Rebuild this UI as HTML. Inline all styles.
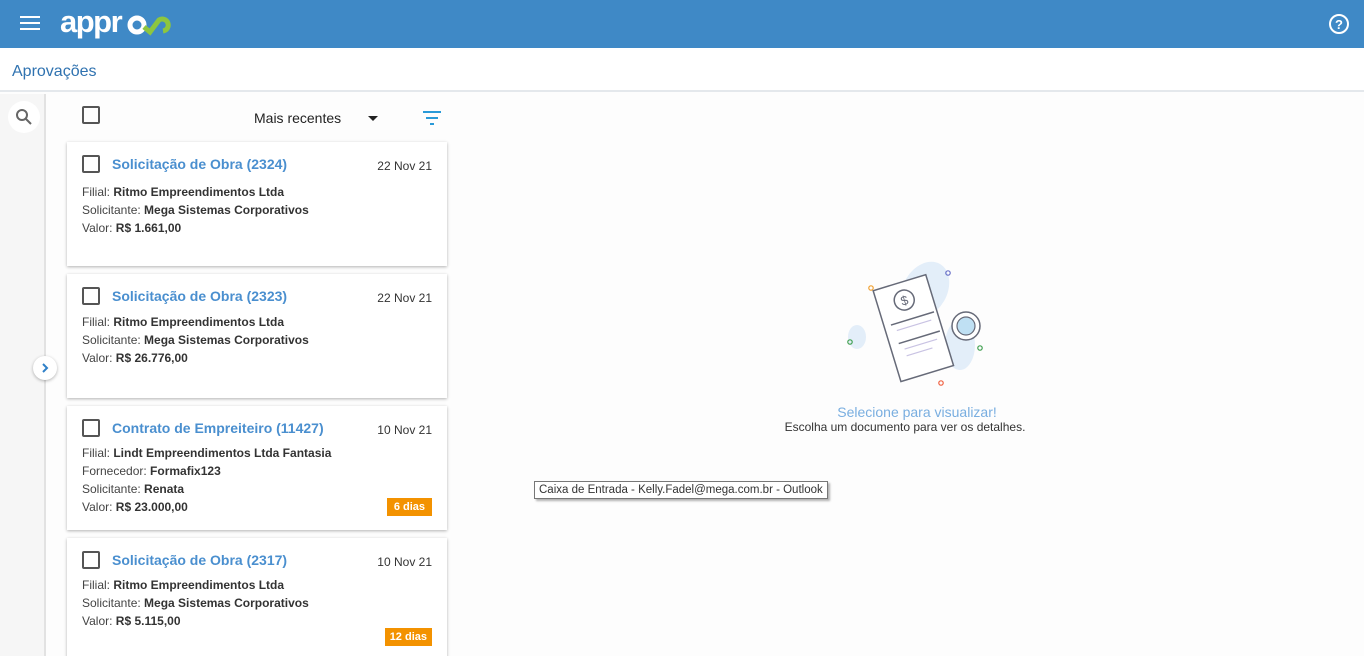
<!DOCTYPE html>
<html><head><meta charset="utf-8"><style>
*{box-sizing:border-box;margin:0;padding:0}
html,body{width:1364px;height:656px;overflow:hidden}
body{background:#fdfdfd;font-family:"Liberation Sans",Arial,sans-serif;position:relative}
.hdr{position:absolute;left:0;top:0;width:1364px;height:48px;background:#3f89c6}
.bar{position:absolute;left:0;top:48px;width:1364px;height:44px;background:#fff;border-bottom:2px solid #e4e8ec}
.bar span{position:absolute;left:12px;top:15px;font-size:16px;color:#2f72b0}
.rail{position:absolute;left:0;top:94px;width:46px;height:562px;background:#f6f6f6;border-right:2px solid #e2e2e2}
.card{position:absolute;left:67px;width:380px;background:#fff;box-shadow:0 1px 3px rgba(0,0,0,.3);font-size:12px;color:#444}
.cb{position:absolute;width:18px;height:18px;border:2px solid #555;border-radius:2px}
.t{position:absolute;left:45px;top:14px;font-size:14px;font-weight:bold;color:#4a8fcf}
.d{position:absolute;right:15px;top:17px;font-size:12px;color:#333}
.l{position:absolute;left:15px}
.l b{color:#333}
.tag{position:absolute;right:15px;background:#f39200;color:#fff;font-size:11px;font-weight:bold;padding:3px 7px}
</style></head><body>
<div class="hdr">
<div style="position:absolute;left:20px;top:16px;width:20px;height:2px;background:#fff;box-shadow:0 6px 0 #fff,0 12px 0 #fff"></div>
<div style="position:absolute;left:60px;top:4px;font-size:31px;font-weight:bold;color:#fff;letter-spacing:-1.5px">appr</div>
<svg style="position:absolute;left:127px;top:12px" width="46" height="24" viewBox="0 0 46 24"><circle cx="10" cy="13" r="7" fill="none" stroke="#fff" stroke-width="5"/><path d="M17 15 L23 20 L32 8 A6 6 0 1 1 36 19" fill="none" stroke="#8dc63f" stroke-width="5"/></svg>
<svg style="position:absolute;left:1328px;top:13px" width="22" height="22" viewBox="0 0 22 22"><circle cx="11" cy="11" r="9" fill="none" stroke="#fff" stroke-width="2"/><text x="11" y="16" text-anchor="middle" font-size="13" font-weight="bold" fill="#fff" font-family="Liberation Sans">?</text></svg>
</div>
<div class="bar"><span>Aprovações</span></div>
<div class="rail">
<div style="position:absolute;left:8px;top:7px;width:32px;height:32px;border-radius:50%;background:#fff"></div>
<svg style="position:absolute;left:15px;top:14px" width="18" height="18" viewBox="0 0 18 18"><circle cx="7" cy="7" r="5" fill="none" stroke="#666" stroke-width="2"/><path d="M11 11 L16 16" stroke="#666" stroke-width="2"/></svg>
<div style="position:absolute;left:33px;top:262px;width:24px;height:24px;border-radius:50%;background:#fff;box-shadow:0 1px 3px rgba(0,0,0,.3)"></div>
<svg style="position:absolute;left:39px;top:268px" width="12" height="12" viewBox="0 0 12 12"><path d="M4 2 L8 6 L4 10" fill="none" stroke="#2f80c8" stroke-width="2"/></svg>
</div>
<div class="cb" style="left:82px;top:106px"></div>
<div style="position:absolute;left:254px;top:110px;font-size:14px;color:#222">Mais recentes</div>
<div style="position:absolute;left:368px;top:116px;border:5px solid transparent;border-top-color:#222;border-bottom:0"></div>
<svg style="position:absolute;left:422px;top:110px" width="20" height="16" viewBox="0 0 20 16"><path d="M1 2H19M4 8H16M8 14H12" stroke="#2a9ad8" stroke-width="2"/></svg>

<div class="card" style="top:142px;height:124px"><div class="cb" style="left:15px;top:13px"></div><div class="t">Solicitação de Obra (2324)</div><div class="d">22 Nov 21</div>
<div class="l" style="top:43px">Filial: <b>Ritmo Empreendimentos Ltda</b></div><div class="l" style="top:61px">Solicitante: <b>Mega Sistemas Corporativos</b></div><div class="l" style="top:79px">Valor: <b>R$ 1.661,00</b></div></div>

<div class="card" style="top:274px;height:124px"><div class="cb" style="left:15px;top:13px"></div><div class="t">Solicitação de Obra (2323)</div><div class="d">22 Nov 21</div>
<div class="l" style="top:41px">Filial: <b>Ritmo Empreendimentos Ltda</b></div><div class="l" style="top:59px">Solicitante: <b>Mega Sistemas Corporativos</b></div><div class="l" style="top:77px">Valor: <b>R$ 26.776,00</b></div></div>

<div class="card" style="top:406px;height:124px"><div class="cb" style="left:15px;top:13px"></div><div class="t">Contrato de Empreiteiro (11427)</div><div class="d">10 Nov 21</div>
<div class="l" style="top:40px">Filial: <b>Lindt Empreendimentos Ltda Fantasia</b></div><div class="l" style="top:58px">Fornecedor: <b>Formafix123</b></div><div class="l" style="top:76px">Solicitante: <b>Renata</b></div><div class="l" style="top:94px">Valor: <b>R$ 23.000,00</b></div><div class="tag" style="top:92px">6 dias</div></div>

<div class="card" style="top:538px;height:130px"><div class="cb" style="left:15px;top:13px"></div><div class="t">Solicitação de Obra (2317)</div><div class="d">10 Nov 21</div>
<div class="l" style="top:40px">Filial: <b>Ritmo Empreendimentos Ltda</b></div><div class="l" style="top:58px">Solicitante: <b>Mega Sistemas Corporativos</b></div><div class="l" style="top:76px">Valor: <b>R$ 5.115,00</b></div><div class="tag" style="top:90px;padding:3px 5px">12 dias</div></div>

<svg style="position:absolute;left:840px;top:255px" width="160" height="135" viewBox="0 0 160 135">
<ellipse cx="85" cy="35" rx="22" ry="30" fill="#e3eef9" transform="rotate(30 85 35)"/>
<ellipse cx="120" cy="90" rx="15" ry="25" fill="#e3eef9"/>
<ellipse cx="17" cy="82" rx="9" ry="12" fill="#e3eef9"/>
<g transform="rotate(-17 75 70)"><path d="M45 25 L100 25 L100 120 L45 120 L45 38 Z" fill="#fff" stroke="#666a78" stroke-width="1.5"/>
<circle cx="72" cy="43" r="10" fill="none" stroke="#666a78" stroke-width="1.5"/><text x="72" y="48" text-anchor="middle" font-size="13" fill="#666a78" font-family="Liberation Sans">$</text>
<path d="M52 63H97M54 83H97" stroke="#666a78" stroke-width="1.5"/><path d="M56 70H92M58 90H92M58 97H85" stroke="#c9c3e3" stroke-width="1.2"/></g>
<circle cx="126" cy="71" r="14" fill="#fff" stroke="#666a78" stroke-width="1.5"/><circle cx="126" cy="71" r="9" fill="#bfe0f3" stroke="#666a78" stroke-width="1.2"/>
<circle cx="31" cy="33" r="2.2" fill="none" stroke="#f0a030" stroke-width="1.2"/><circle cx="108" cy="18" r="2.2" fill="none" stroke="#6870c8" stroke-width="1.2"/><circle cx="10" cy="87" r="2.2" fill="none" stroke="#40a050" stroke-width="1.2"/><circle cx="140" cy="93" r="2.2" fill="none" stroke="#40a050" stroke-width="1.2"/><circle cx="101" cy="128" r="2.2" fill="none" stroke="#f06040" stroke-width="1.2"/>
</svg>
<div style="position:absolute;left:0;width:1834px;top:404px;text-align:center;font-size:14px;color:#79aee0">Selecione para visualizar!</div>
<div style="position:absolute;left:0;width:1810px;top:420px;text-align:center;font-size:12px;color:#333">Escolha um documento para ver os detalhes.</div>
<div style="position:absolute;left:534px;top:481px;padding:2px 4px;background:#fff;border:1px solid #777;box-shadow:2px 2px 2px rgba(0,0,0,.3);font-size:11.5px;color:#333">Caixa de Entrada - Kelly.Fadel@mega.com.br - Outlook</div>
</body></html>
